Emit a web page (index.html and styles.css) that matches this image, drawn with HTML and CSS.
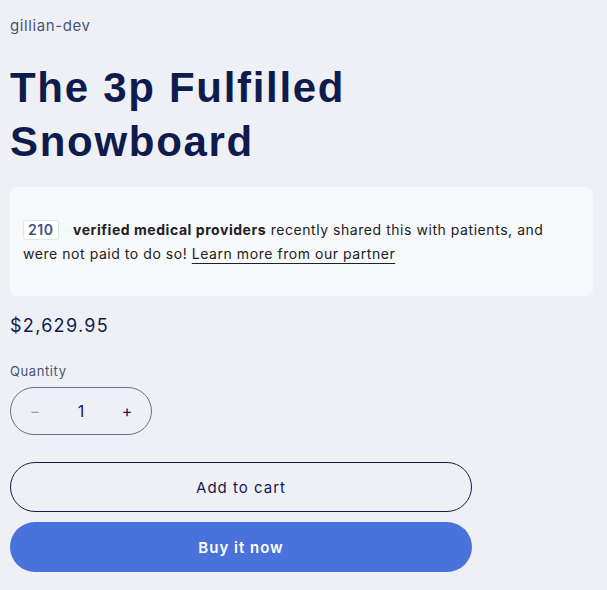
FILE: index.html
```html
<!DOCTYPE html>
<html>
<head>
<meta charset="utf-8">
<link rel="stylesheet" href="styles.css">
</head>
<body>
<main class="product">
  <p class="vendor">gillian-dev</p>
  <h1 class="title">The 3p Fulfilled Snowboard</h1>
  <div class="notice">
    <p><span class="badge">210</span> <strong>verified medical providers</strong> recently shared this with patients, and were not paid to do so! <a href="#" class="link">Learn more from our partner</a></p>
  </div>
  <p class="price">$2,629.95</p>
  <div class="qty-wrap">
    <label class="qty-label">Quantity</label>
    <div class="qty">
      <button class="qty-btn minus">&minus;</button>
      <span class="qty-val">1</span>
      <button class="qty-btn plus">+</button>
    </div>
  </div>
  <div class="actions">
    <button class="btn btn-outline">Add to cart</button>
    <button class="btn btn-primary">Buy it now</button>
  </div>
</main>
</body>
</html>
```
FILE: styles.css
```css
html, body {
  margin: 0;
  padding: 0;
  background: #eff0f5;
}
body {
  font-family: Inter, "Noto Sans", sans-serif;
  color: #121c4e;
}
.product {
  padding: 0 14px 0 10px;
  display: flex;
  flex-direction: column;
}
.vendor {
  margin: 16px 0 0;
  font-size: 15px;
  line-height: 20px;
  letter-spacing: 0.6px;
  color: #4a5377;
}
.title {
  margin: 25px 0 0;
  font-family: "Liberation Sans", Arial, sans-serif;
  font-weight: 700;
  font-size: 42px;
  line-height: 54px;
  letter-spacing: 1.7px;
  color: #0e1b4d;
}
.notice {
  margin-top: 18px;
  background: #f7f8f9;
  border-radius: 7px;
  padding: 31px 22px 30px 13px;
  width: 548px;
}
.notice p {
  margin: 0;
  font-size: 14px;
  line-height: 24px;
  letter-spacing: 0.55px;
  color: #202124;
}
.notice strong {
  font-weight: 700;
}
.badge {
  display: inline-block;
  vertical-align: top;
  margin: 2px 10px 0 0;
  border: 1px solid #d7ecde;
  background: #fff;
  border-radius: 3px;
  padding: 0 4px;
  line-height: 18px;
  font-weight: 600;
  color: #454f7c;
}
.link {
  color: #202124;
  text-decoration: underline;
  text-underline-offset: 4px;
}
.price {
  margin: 18px 0 0;
  font-size: 18px;
  line-height: 24px;
  letter-spacing: 1.3px;
  color: #121c4e;
}
.qty-wrap {
  margin-top: 25px;
  display: flex;
  flex-direction: column;
  gap: 8px;
}
.qty-label {
  font-size: 13px;
  line-height: 16px;
  letter-spacing: 0.6px;
  color: #4a5377;
}
.qty {
  box-sizing: border-box;
  width: 142px;
  height: 48px;
  border: 1px solid #6a7091;
  border-radius: 24px;
  display: flex;
  align-items: center;
  justify-content: space-between;
  padding: 0 4px;
}
.qty-btn {
  background: none;
  border: none;
  width: 40px;
  font-size: 16px;
  font-family: inherit;
  color: #121c4e;
  padding: 0;
}
.qty-btn.minus {
  color: #9aa0b8;
}
.qty-val {
  font-size: 16px;
  color: #121c4e;
}
.actions {
  margin-top: 27px;
  display: flex;
  flex-direction: column;
  gap: 10px;
  width: 462px;
}
.btn {
  height: 50px;
  border-radius: 25px;
  font-family: inherit;
  font-size: 15px;
  letter-spacing: 1px;
}
.btn-outline {
  background: transparent;
  border: 1px solid #121c4e;
  color: #121c4e;
}
.btn-primary {
  background: #4a72db;
  border: none;
  color: #fff;
  font-weight: 600;
}
```
